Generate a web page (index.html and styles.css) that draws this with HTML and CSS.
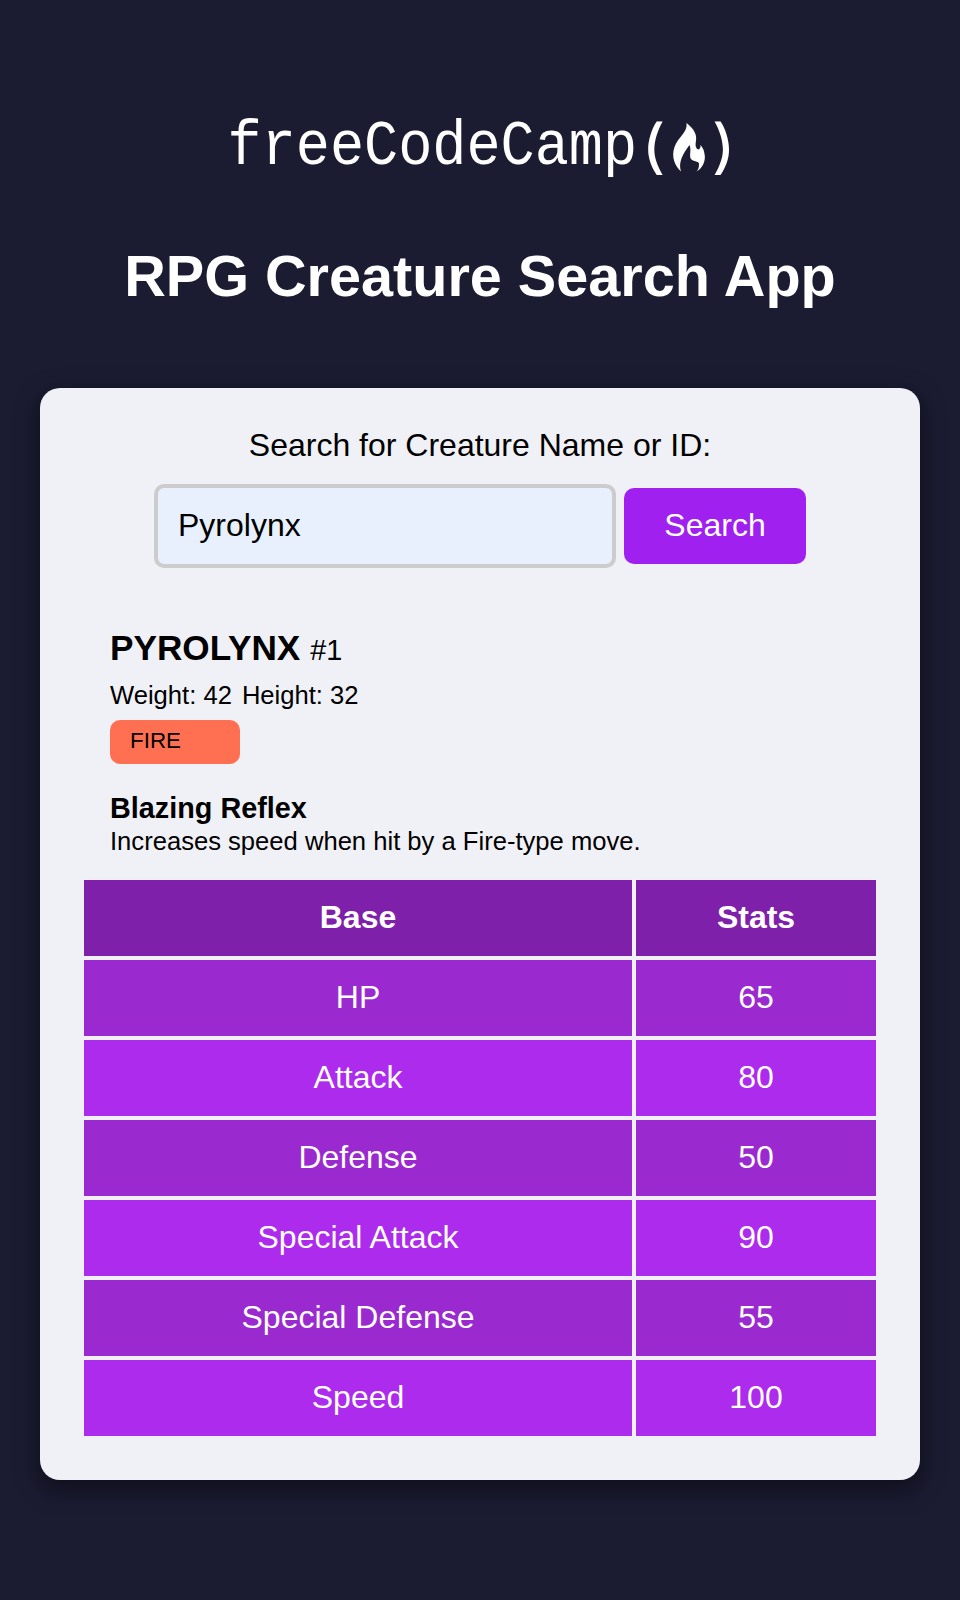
FILE: index.html
```html
<!DOCTYPE html>
<html lang="en">
<head>
<meta charset="utf-8">
<title>RPG Creature Search App</title>
<link rel="stylesheet" href="styles.css">
</head>
<body>
<main>
  <svg class="logo" viewBox="220 90 520 120" role="img" aria-label="freeCodeCamp">
    <text transform="translate(227.5 164) scale(1 1.1)" font-size="56.9">freeCodeCamp</text>
    <text class="paren" transform="translate(641 166.5) scale(1.15 1)" font-size="59">(</text>
    <path d="M686.500 123 C688 132 678 137 674.500 147 C671 157 675 166 681 171.500 C678 162 683 154 689.500 145 C692 151 688 157 692 160 C695 162 699 161 699 164 C699 168 698 170 696.500 171.500 C703 168 706 160 704.500 154 C704 149 702 147 700.500 145 C701 149 698 151 696.500 148 C694 144 698 139 695 133 C693 128 689 125 686.500 123Z"/>
    <text class="paren" transform="translate(711.5 166.5) scale(1.15 1)" font-size="59">)</text>
  </svg>
  <h1>RPG Creature Search App</h1>
  <div class="card">
    <form class="search">
      <label for="query">Search for Creature Name or ID:</label>
      <div class="controls">
        <input id="query" type="text" value="Pyrolynx">
        <button type="button">Search</button>
      </div>
    </form>
    <section class="creature">
      <div class="name"><strong>PYROLYNX</strong><span>#1</span></div>
      <div class="size"><span>Weight: 42</span><span>Height: 32</span></div>
      <div class="type">FIRE</div>
      <h2>Blazing Reflex</h2>
      <p>Increases speed when hit by a Fire-type move.</p>
    </section>
    <div class="stats">
      <div class="head">Base</div><div class="head">Stats</div>
      <div class="odd">HP</div><div class="odd">65</div>
      <div>Attack</div><div>80</div>
      <div class="odd">Defense</div><div class="odd">50</div>
      <div>Special Attack</div><div>90</div>
      <div class="odd">Special Defense</div><div class="odd">55</div>
      <div>Speed</div><div>100</div>
    </div>
  </div>
</main>
</body>
</html>
```
FILE: styles.css
```css
* { box-sizing: border-box; }
body {
  margin: 0;
  min-height: 1600px;
  background: #1b1b32;
  color: #000;
  font-family: "Liberation Sans", Arial, sans-serif;
  font-size: 32px;
}
main {
  display: flex;
  flex-direction: column;
  align-items: center;
  padding-top: 90px;
}
.logo {
  display: block;
  width: 520px;
  height: 120px;
  fill: #fff;
  font-family: "Liberation Mono", monospace;
}
.paren { font-family: Inter, sans-serif; }
h1 {
  margin: 34px 0 0;
  color: #fff;
  font-size: 57.6px;
  line-height: 64px;
}
.card {
  width: 880px;
  height: 1092px;
  margin-top: 80px;
  padding: 38px 44px 44px;
  border-radius: 20px;
  background: #f0f1f7;
  box-shadow: 0 8px 24px rgba(0, 0, 0, .5);
}
.search { text-align: center; }
.search label { display: block; line-height: 38px; }
.controls {
  display: flex;
  justify-content: center;
  align-items: center;
  gap: 8px;
  margin-top: 20px;
}
.controls input {
  width: 462px;
  height: 84px;
  padding: 0 20px 2px;
  border: 4px solid #ccc;
  border-radius: 10px;
  background: #e8f0fe;
  color: #000;
  font: inherit;
  outline: none;
}
.controls button {
  width: 182px;
  height: 76px;
  padding: 0 0 2px;
  border: 0;
  border-radius: 10px;
  background: #9f20ef;
  color: #fff;
  font: inherit;
}
.creature { height: 312px; padding: 58px 26px 0; }
.name { display: flex; align-items: baseline; gap: 10px; line-height: 44px; }
.name strong { font-size: 35.2px; }
.name span { font-size: 28.8px; }
.size { display: flex; gap: 10px; margin-top: 7px; font-size: 25.6px; line-height: 32px; }
.type {
  width: 130px;
  height: 44px;
  margin-top: 9px;
  padding-left: 20px;
  border-radius: 10px;
  background: #ff7052;
  font-size: 22.4px;
  line-height: 41px;
}
h2 { margin: 28px 0 0; font-size: 28.8px; line-height: 32px; }
.creature p { margin: 1px 0 0; font-size: 25.6px; line-height: 32px; }
.stats {
  display: grid;
  grid-template-columns: 548px 240px;
  grid-auto-rows: 76px;
  gap: 4px;
  color: #fff;
  text-align: center;
  line-height: 75px;
}
.stats div { background: #ad2bed; }
.stats .odd { background: #9a2acf; }
.stats .head { background: #7f20aa; font-weight: bold; }
```
